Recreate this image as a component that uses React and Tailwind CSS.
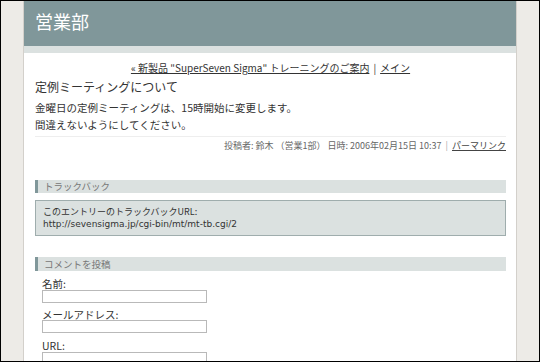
export default function App() {
  const font = { fontFamily: '"Noto Sans CJK JP", "Noto Sans", sans-serif' };
  return (
    <div
      className="w-[540px] h-[362px] overflow-hidden border border-black bg-[#edebe7] box-border"
      style={font}
    >
      <div className="ml-[22px] w-[494px] h-full border-x border-[#d3d0cb] bg-white">
        {/* ヘッダー */}
        <div className="h-[45px] bg-[#80979a] flex items-center pl-[11px] pb-[5px]">
          <h1 className="text-white text-[18px] leading-none">営業部</h1>
        </div>
        <div className="h-[7px] bg-[#dbe1e0]" />

        <div className="pl-[11px] pr-[10px]">
          <div className="text-center text-[10px] leading-none text-[#333] mt-[10px]">
            <a className="underline">« 新製品 "SuperSeven Sigma" トレーニングのご案内</a>
            <span className="mx-[4px]">|</span>
            <a className="underline">メイン</a>
          </div>

          <h2 className="text-[12px] leading-none text-[#333] mt-[8px]">定例ミーティングについて</h2>

          <div className="text-[10.5px] leading-[17px] text-[#333] mt-[6px]">
            <p>金曜日の定例ミーティングは、15時開始に変更します。</p>
            <p>間違えないようにしてください。</p>
          </div>

          <div className="border-t border-[#eeeeee] mt-[3px] pt-[3px] text-right text-[9px] leading-[12px] text-[#666]">
            投稿者: 鈴木 （営業1部） 日時: 2006年02月15日 10:37
            <span className="mx-[4px] text-[#aaa]">|</span>
            <a className="underline text-[#444]">パーマリンク</a>
          </div>

          {/* トラックバック */}
          <div className="mt-[28px] h-[13px] bg-[#dbe1e0] border-l-[3px] border-[#80979a] pl-[6px] flex items-center text-[9.5px] text-[#777]">
            トラックバック
          </div>
          <div className="mt-[7px] h-[36px] bg-[#dbe1e0] border border-[#9fadad] px-[7px] flex flex-col justify-center text-[9px] leading-[12px] text-[#333]">
            <p>このエントリーのトラックバックURL:</p>
            <p style={{ fontFamily: '"DejaVu Sans", sans-serif' }}>http://sevensigma.jp/cgi-bin/mt/mt-tb.cgi/2</p>
          </div>

          {/* コメント */}
          <div className="mt-[21px] h-[14px] bg-[#dbe1e0] border-l-[3px] border-[#80979a] pl-[6px] flex items-center text-[9.5px] text-[#777]">
            コメントを投稿
          </div>

          <div className="pl-[7px] text-[10.5px] text-[#333]">
            <label className="block leading-none mt-[8px]">名前:</label>
            <input className="block w-[165px] h-[13px] border border-[#b9b9b9]" />
            <label className="block leading-none mt-[7px]">メールアドレス:</label>
            <input className="block w-[165px] h-[13px] border border-[#b9b9b9]" />
            <label className="block leading-none mt-[8px]">URL:</label>
            <input className="block w-[165px] h-[13px] border border-[#b9b9b9]" />
          </div>
        </div>
      </div>
    </div>
  );
}
